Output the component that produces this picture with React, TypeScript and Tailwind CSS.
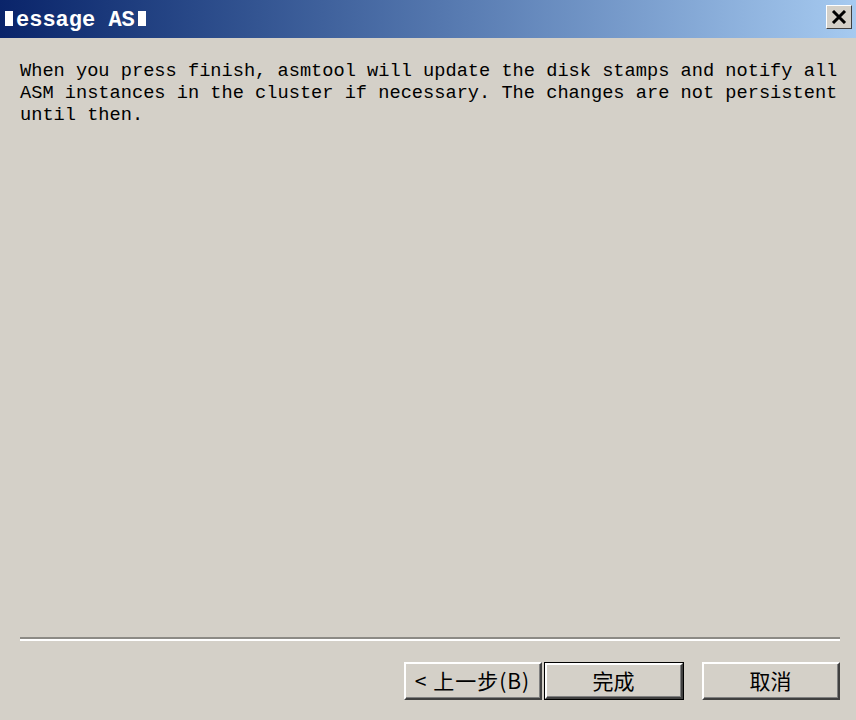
const mono = { fontFamily: '"Liberation Mono", "DejaVu Sans Mono", monospace' };

const Block = () => <span className="inline-block w-[8px] h-[15px] bg-white mx-[3px]" />;

const WinButton = ({ label, isDefault, className = "" }: { label: string; isDefault?: boolean; className?: string }) => (
  <div className={`h-[38px] ${isDefault ? "border border-black" : ""} ${className}`}>
    <div className="h-full border-t-2 border-l-2 border-t-white border-l-white border-b-2 border-r-2 border-b-[#404040] border-r-[#404040]">
      <div className="h-full flex items-center justify-center border-b border-r border-b-[#808080] border-r-[#808080] bg-[#d4d0c8] text-[21px] text-black whitespace-pre font-['Noto_Sans_CJK_SC',sans-serif]">
        {label}
      </div>
    </div>
  </div>
);

export default function App() {
  return (
    <div className="w-[856px] h-[720px] bg-[#d4d0c8] flex flex-col overflow-hidden">
      {/* title bar */}
      <div className="h-[38px] flex items-center justify-between bg-gradient-to-r from-[#0a246a] to-[#a6caf0] pl-[2px] pr-[4px]">
        <div className="text-white font-bold text-[22px] leading-none flex items-baseline pt-[3px]" style={mono}>
          <Block />
          <span>essage AS</span>
          <Block />
        </div>
        <div className="w-[26px] h-[24px] mb-[4px] bg-[#d4d0c8] border-t border-l border-white border-b border-r border-b-[#404040] border-r-[#404040] flex items-center justify-center">
          <svg width="16" height="14" viewBox="0 0 16 14">
            <path d="M2 1 L14 13 M14 1 L2 13" stroke="#000" strokeWidth="3" />
          </svg>
        </div>
      </div>

      {/* message */}
      <div className="px-[20px] pt-[22px] text-[18.67px] leading-[22px] text-black whitespace-pre" style={mono}>
        {"When you press finish, asmtool will update the disk stamps and notify all\nASM instances in the cluster if necessary. The changes are not persistent\nuntil then."}
      </div>

      {/* footer */}
      <div className="mt-auto px-[16px] pb-[20px]">
        <div className="ml-[4px] border-t-2 border-[#8c8a85] border-b-2 border-b-white" />
        <div className="flex justify-end mt-[21px]">
          <WinButton label="< 上一步(B)" className="w-[138px] tracking-[1px]" />
          <WinButton label="完成" isDefault className="w-[140px] ml-[2px]" />
          <WinButton label="取消" className="w-[138px] ml-[18px]" />
        </div>
      </div>
    </div>
  );
}
